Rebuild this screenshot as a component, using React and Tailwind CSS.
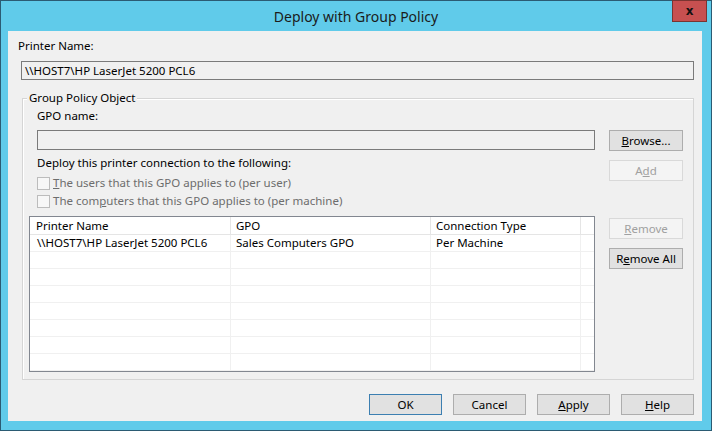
import React from 'react';

const btn = 'h-[21px] border flex items-center justify-center text-[11.5px] leading-none';
const normal = 'bg-[#e1e1e1] border-[#adadad] text-black';
const disabled = 'bg-[#f4f4f4] border-[#d9d9d9] text-[#a0a0a0]';

const Btn = ({ children, off, def, className = '' }) => (
  <div className={`${btn} ${off ? disabled : def ? 'bg-[#e1e1e1] border-[#3c7fb1] text-black' : normal} ${className}`}>
    {children}
  </div>
);

const CheckRow = ({ children }) => (
  <div className="h-[18px] flex items-center">
    <div className="w-[13px] h-[13px] border border-[#bcbcbc] bg-[#f7f7f7]" />
    <span className="ml-[3px] text-[#6d6d6d]">{children}</span>
  </div>
);

const ROWS = [
  { printer: '\\\\HOST7\\HP LaserJet 5200 PCL6', gpo: 'Sales Computers GPO', type: 'Per Machine' },
];

export default function App() {
  const blank = Array.from({ length: 7 });

  return (
    <div className="w-[712px] h-[431px] bg-[#60cbea] border border-[#2b5b73] flex flex-col font-['Noto_Sans',sans-serif] text-[11.5px] text-black select-none">
      {/* Title bar */}
      <div className="h-[30px] relative flex items-center justify-center shrink-0">
        <span className="text-[14px] text-[#1b1b1b] mt-[1px]">Deploy with Group Policy</span>
        <div className="absolute right-[4px] top-[-1px] w-[35px] h-[22px] bg-[#c75050] border border-[#7a3431] flex items-center justify-center">
          <span className="font-['DejaVu_Sans',sans-serif] font-bold text-[12px] leading-none text-[#111]">x</span>
        </div>
      </div>

      {/* Client area */}
      <div className="ml-[7px] mr-[9px] h-[390px] bg-[#f0f0f0] flex flex-col shrink-0">
        <div className="pl-[10px] pt-[7px] h-[23px] leading-[16px]">Printer Name:</div>
        <div className="ml-[13px] mt-[7px] w-[673px] h-[19px] border border-[#7a7a7a] bg-[#f0f0f0] flex items-center pl-[3px]">
          {ROWS[0].printer}
        </div>

        {/* Group box */}
        <div className="relative ml-[14px] mt-[18px] w-[672px] h-[282px] border border-[#d5d5d5] shadow-[inset_1px_1px_0_#fff]">
          <span className="absolute left-[4px] top-[-9px] px-[2px] bg-[#f0f0f0] leading-[16px]">Group Policy Object</span>

          <div className="pl-[14px] pt-[9px] leading-[16px]">GPO name:</div>

          <div className="flex mt-[6px]">
            <div className="ml-[14px] w-[558px] flex flex-col">
              <div className="h-[20px] border border-[#7a7a7a] bg-[#f0f0f0]" />
              <div className="mt-[5px] h-[16px] leading-[16px]">Deploy this printer connection to the following:</div>
              <div className="mt-[3px]">
                <CheckRow><span className="underline">T</span>he users that this GPO applies to (per user)</CheckRow>
                <CheckRow>The com<span className="underline">p</span>uters that this GPO applies to (per machine)</CheckRow>
              </div>
            </div>
            <div className="ml-[14px] w-[74px] flex flex-col">
              <Btn><span className="underline">B</span>rowse...</Btn>
              <Btn off className="mt-[9px]">A<span className="underline">d</span>d</Btn>
            </div>
          </div>

          <div className="flex mt-[6px]">
            {/* List view */}
            <div className="ml-[6px] w-[566px] h-[156px] border border-[#828790] bg-white flex flex-col overflow-hidden">
              <div className="h-[18px] flex border-b border-[#e5e5e5] shrink-0">
                <div className="w-[201px] pl-[6px] border-r border-[#e5e5e5] leading-[17px]">Printer Name</div>
                <div className="w-[200px] pl-[5px] border-r border-[#e5e5e5] leading-[17px]">GPO</div>
                <div className="w-[150px] pl-[5px] border-r border-[#e5e5e5] leading-[17px]">Connection Type</div>
                <div className="flex-1" />
              </div>
              {ROWS.map((r) => (
                <div key={r.printer} className="h-[17px] flex border-b border-[#f0f0f0] shrink-0">
                  <div className="w-[201px] pl-[7px] border-r border-[#f0f0f0] leading-[16px]">{r.printer}</div>
                  <div className="w-[200px] pl-[5px] border-r border-[#f0f0f0] leading-[16px]">{r.gpo}</div>
                  <div className="w-[150px] pl-[5px] border-r border-[#f0f0f0] leading-[16px]">{r.type}</div>
                  <div className="flex-1" />
                </div>
              ))}
              {blank.map((_, i) => (
                <div key={i} className="h-[17px] flex border-b border-[#f0f0f0] shrink-0">
                  <div className="w-[201px] border-r border-[#f0f0f0]" />
                  <div className="w-[200px] border-r border-[#f0f0f0]" />
                  <div className="w-[150px] border-r border-[#f0f0f0]" />
                  <div className="flex-1" />
                </div>
              ))}
            </div>
            <div className="ml-[14px] w-[74px] flex flex-col pt-[2px]">
              <Btn off><span className="underline">R</span>emove</Btn>
              <Btn className="mt-[9px]">R<span className="underline">e</span>move All</Btn>
            </div>
          </div>
        </div>

        {/* Dialog buttons */}
        <div className="flex justify-end gap-[11px] mr-[8px] mt-[14px]">
          <Btn def className="w-[73px]">OK</Btn>
          <Btn className="w-[73px]">Cancel</Btn>
          <Btn className="w-[73px]"><span className="underline">A</span>pply</Btn>
          <Btn className="w-[73px]"><span className="underline">H</span>elp</Btn>
        </div>
      </div>
    </div>
  );
}
